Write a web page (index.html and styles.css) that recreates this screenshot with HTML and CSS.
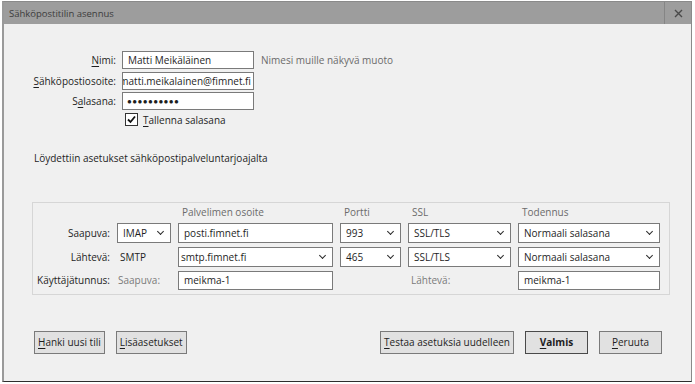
FILE: index.html
```html
<!DOCTYPE html>
<html lang="fi">

<head>
    <meta charset="UTF-8">
    <meta name="viewport" content="width=device-width, initial-scale=1.0">
    <title>Sähköpostitilin asennus</title>
    <link rel="stylesheet" href="styles.css">
</head>

<body>
    <div class="dialog">
        <div class="titlebar">
            <span class="title">Sähköpostitilin asennus</span>
            <span class="close">
                <svg width="9" height="9" viewBox="0 0 9 9"><path d="M1 1 L8 8 M8 1 L1 8" stroke="#4a4a4a" stroke-width="1.4"/></svg>
            </span>
        </div>

        <div class="content">
            <div class="identity">
                <label class="label"><u>N</u>imi:</label>
                <div class="field">Matti Meikäläinen</div>
                <span class="hint">Nimesi muille näkyvä muoto</span>

                <label class="label"><u>S</u>ähköpostiosoite:</label>
                <div class="field field-scrolled"><span>matti.meikalainen@fimnet.fi</span></div>
                <span></span>

                <label class="label">S<u>a</u>lasana:</label>
                <div class="field field-password">●●●●●●●●●●</div>
                <span></span>

                <span></span>
                <label class="checkbox">
                    <span class="box">
                        <svg width="11" height="11" viewBox="0 0 11 11"><path d="M2 5.5 L4.5 8 L9 2.5" fill="none" stroke="#111" stroke-width="1.8"/></svg>
                    </span>
                    <span><u>T</u>allenna salasana</span>
                </label>
            </div>

            <p class="status">Löydettiin asetukset sähköpostipalveluntarjoajalta</p>

            <div class="servers">
                <span></span>
                <span></span>
                <span class="head">Palvelimen osoite</span>
                <span class="head">Portti</span>
                <span class="head">SSL</span>
                <span class="head">Todennus</span>

                <span class="label">Saapuva:</span>
                <div class="select">IMAP<span class="chev"></span></div>
                <div class="field">posti.fimnet.fi</div>
                <div class="select">993<span class="chev"></span></div>
                <div class="select">SSL/TLS<span class="chev"></span></div>
                <div class="select">Normaali salasana<span class="chev"></span></div>

                <span class="label">Lähtevä:</span>
                <span class="plain">SMTP</span>
                <div class="select select-edit">smtp.fimnet.fi<span class="chev"></span></div>
                <div class="select">465<span class="chev"></span></div>
                <div class="select">SSL/TLS<span class="chev"></span></div>
                <div class="select">Normaali salasana<span class="chev"></span></div>

                <span class="label">Käyttäjätunnus:</span>
                <span class="plain muted">Saapuva:</span>
                <div class="field field-short">meikma-1</div>
                <span></span>
                <span class="plain muted out">Lähtevä:</span>
                <div class="field field-short">meikma-1</div>
            </div>

            <div class="buttons">
                <button class="btn"><u>H</u>anki uusi tili</button>
                <button class="btn"><u>L</u>isäasetukset</button>
                <span class="spacer"></span>
                <button class="btn"><u>T</u>estaa asetuksia uudelleen</button>
                <button class="btn btn-default"><u>V</u>almis</button>
                <button class="btn"><u>P</u>eruuta</button>
            </div>
        </div>
    </div>
</body>

</html>
```

FILE: styles.css
```css
body {
    margin: 0;
    background: #ffffff;
    font-family: "Open Sans", "Noto Sans", sans-serif;
    font-size: 10px;
    color: #1e1e1e;
}

.dialog {
    box-sizing: border-box;
    width: 690px;
    height: 381px;
    margin: 1px 0 0 2px;
    background: #f0f0f0;
    border: 1px solid #8a8a8a;
    border-left: 2px solid #9a9a9a;
    border-bottom: 1px solid #2e2e2e;
    display: flex;
    flex-direction: column;
}

.titlebar {
    height: 22px;
    background: #9d9d9d;
    display: flex;
    align-items: center;
}

.title {
    padding-left: 5px;
    font-size: 9.5px;
    color: #3c3c3c;
}

.close {
    margin-left: auto;
    width: 26px;
    height: 100%;
    border-left: 1px solid #858585;
    display: flex;
    align-items: center;
    justify-content: center;
}

.content {
    padding: 0 20px 0 28px;
    display: flex;
    flex-direction: column;
}

u {
    text-decoration-thickness: 1px;
    text-underline-offset: 2px;
}

/* identity form */

.identity {
    display: grid;
    grid-template-columns: 84px 132px auto;
    column-gap: 6px;
    row-gap: 2.5px;
    align-items: center;
    margin-top: 27px;
}

.label {
    text-align: right;
    white-space: nowrap;
}

.field,
.select {
    box-sizing: border-box;
    height: 18px;
    line-height: 16px;
    padding: 0 5px;
    background: #ffffff;
    border: 1px solid #7a7a7a;
    white-space: nowrap;
    overflow: hidden;
}

.field-scrolled {
    display: flex;
    justify-content: flex-end;
    padding: 0 2px 0 0;
}

.field-password {
    font-size: 8px;
    letter-spacing: 0.4px;
    line-height: 16px;
    padding-left: 4px;
}

.hint {
    color: #6b6b6b;
    padding-left: 1px;
}

.checkbox {
    display: flex;
    align-items: center;
    gap: 5px;
    padding-left: 3px;
    height: 14px;
}

.box {
    box-sizing: border-box;
    width: 13px;
    height: 13px;
    background: #ffffff;
    border: 1px solid #333333;
    display: flex;
    align-items: center;
    justify-content: center;
}

.status {
    margin: 23px 0 0 2px;
    line-height: 16px;
}

/* server settings */

.servers {
    box-sizing: border-box;
    width: 638px;
    margin-top: 36px;
    padding: 2px 8px 4px 1px;
    border: 1px solid #d6d6d6;
    display: grid;
    grid-template-columns: 76px 54px 155px 61px 103px 142px;
    column-gap: 7px;
    row-gap: 4px;
    align-items: center;
}

.servers .field,
.servers .select {
    height: 20px;
    line-height: 18px;
}

.servers .field-short {
    height: 19px;
    line-height: 17px;
}

.head {
    color: #6b6b6b;
    padding-left: 4px;
    line-height: 14px;
}

.plain {
    padding-left: 3px;
}

.muted {
    color: #7a7a7a;
    padding-left: 1px;
}

.muted.out {
    padding-left: 3px;
}

.select {
    position: relative;
    padding-right: 18px;
}

.select-edit {
    padding-left: 2px;
}

.chev {
    position: absolute;
    right: 7px;
    top: 5px;
    width: 4px;
    height: 4px;
    border-right: 1.5px solid #2a2a2a;
    border-bottom: 1.5px solid #2a2a2a;
    transform: rotate(45deg);
}

/* footer buttons */

.buttons {
    display: flex;
    gap: 11px;
    margin: 36px 0 0 2px;
    width: 628px;
}

.spacer {
    flex: 1;
}

.btn {
    height: 23px;
    min-width: 63px;
    padding: 0 3px;
    font: inherit;
    color: #1e1e1e;
    background: #e1e1e1;
    border: 1px solid #7a7a7a;
}

.btn-default {
    font-weight: 700;
    border-color: #4a4a4a;
}
```
